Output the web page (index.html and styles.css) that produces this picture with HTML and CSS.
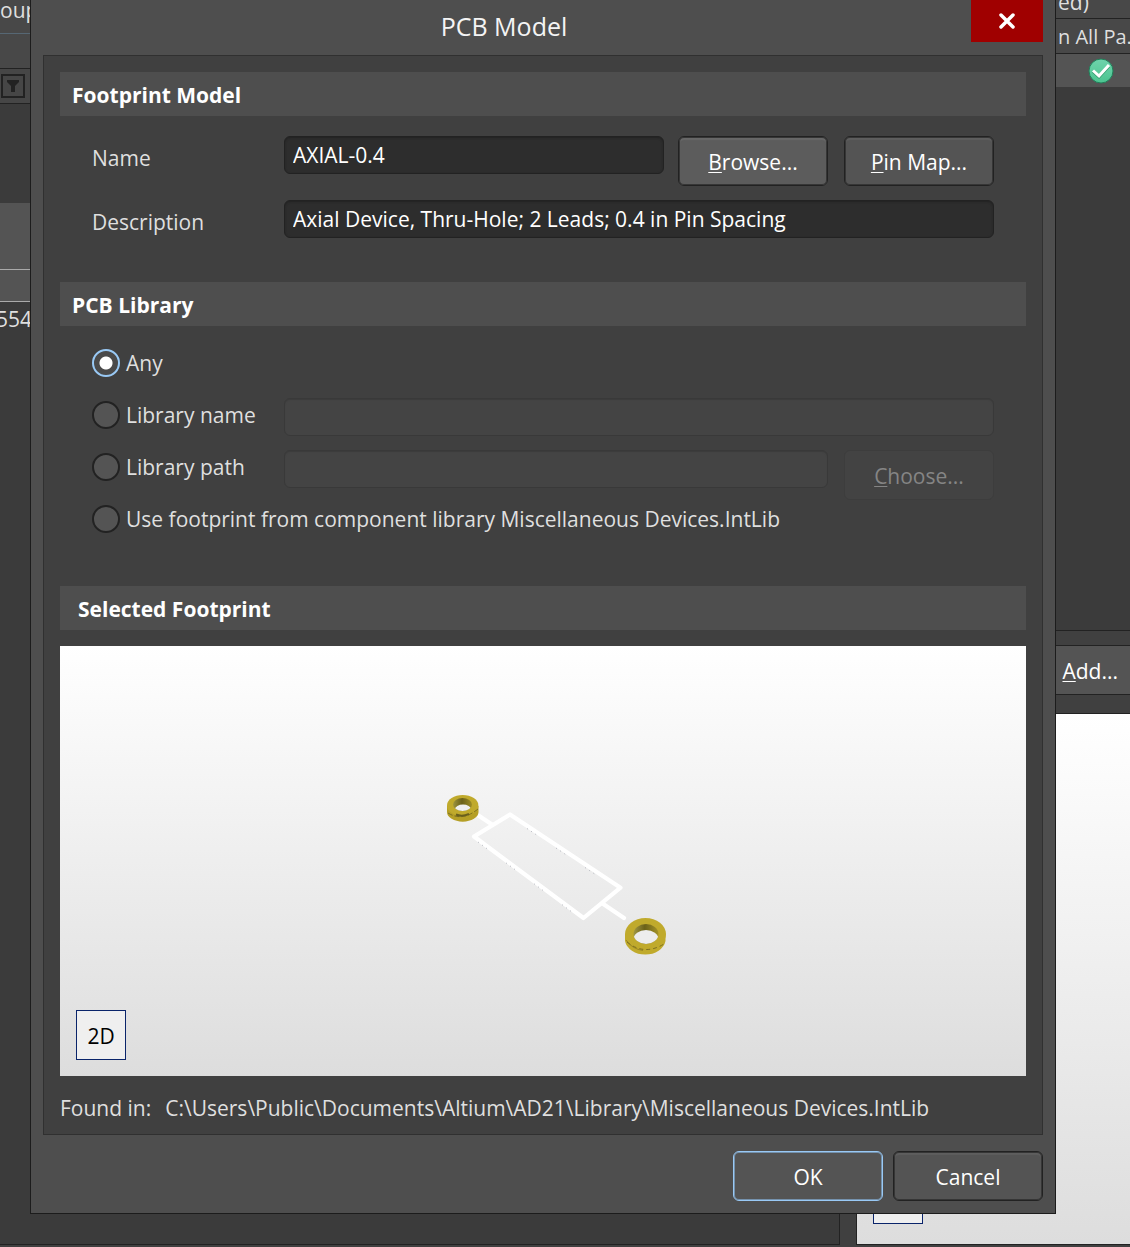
FILE: index.html
```html
<!DOCTYPE html>
<html lang="en">
<head>
<meta charset="utf-8">
<title>PCB Model</title>
<link rel="stylesheet" href="styles.css">
</head>
<body>
<div class="stage">
  <div class="backdrop">
    <div class="back-left">
      <div class="group-bar">oup</div>
      <div class="group-space"></div>
      <div class="filter-row">
        <button class="filter-button" type="button" aria-label="Filter">
          <svg width="12" height="12" viewBox="0 0 12 12"><path d="M0 0H12V2L8 6V12H4V6L0 2Z" fill="#222"/></svg>
        </button>
      </div>
      <div class="list-space"></div>
      <div class="list-selected"></div>
      <div class="list-current"></div>
      <div class="list-value">554</div>
    </div>
    <div class="back-right">
      <div class="grid-caption"><span class="grid-cell">ed)</span></div>
      <div class="grid-head"><span class="grid-cell">n All Pa...</span></div>
      <div class="grid-row">
        <span class="grid-cell grid-status">
          <svg width="26" height="26" viewBox="0 0 26 26" role="img" aria-label="Found">
            <defs><linearGradient id="ok" x1="0" y1="0" x2="0" y2="1"><stop offset="0" stop-color="#6fd3ac"/><stop offset="1" stop-color="#4cc490"/></linearGradient></defs>
            <circle cx="13" cy="13" r="12" fill="url(#ok)" stroke="#21805a"/>
            <path d="M5 13.500L11 19L21 8" fill="none" stroke="#2f9a6c" stroke-width="3"/>
            <path d="M5 12.500L11 18L21 7" fill="none" stroke="#fff" stroke-width="3"/>
          </svg>
        </span>
      </div>
      <div class="grid-body"></div>
      <div class="grid-actions"><button class="add-button" type="button"><u>A</u>dd...</button></div>
      <div class="back-preview"><div class="back-mode"></div></div>
    </div>
  </div>

  <main class="dialog" role="dialog" aria-labelledby="dialog-title">
    <header class="titlebar">
      <h1 class="title" id="dialog-title">PCB Model</h1>
      <button class="close" type="button" aria-label="Close">
        <svg width="16" height="16" viewBox="0 0 16 16"><path d="M2 2L14 14M14 2L2 14" stroke="#fff" stroke-width="3.500" stroke-linecap="round"/></svg>
      </button>
    </header>

    <form class="panel">
      <h2 class="section">Footprint Model</h2>
      <div class="fields">
        <div class="field">
          <label class="label" for="name">Name</label>
          <input class="input" id="name" type="text" value="AXIAL-0.4">
          <div class="actions">
            <button class="button button-hover" type="button"><u>B</u>rowse...</button>
            <button class="button" type="button"><u>P</u>in Map...</button>
          </div>
        </div>
        <div class="field">
          <label class="label" for="description">Description</label>
          <input class="input" id="description" type="text" value="Axial Device, Thru-Hole; 2 Leads; 0.4 in Pin Spacing">
        </div>
      </div>

      <h2 class="section">PCB Library</h2>
      <div class="options">
        <div class="option">
          <label class="choice"><input class="radio" type="radio" name="library" checked>Any</label>
        </div>
        <div class="option">
          <label class="choice choice-field"><input class="radio" type="radio" name="library">Library name</label>
          <input class="input" type="text" aria-label="Library name" disabled>
        </div>
        <div class="option">
          <label class="choice choice-field"><input class="radio" type="radio" name="library">Library path</label>
          <input class="input" type="text" aria-label="Library path" disabled>
          <button class="button choose" type="button" disabled><u>C</u>hoose...</button>
        </div>
        <div class="option">
          <label class="choice"><input class="radio" type="radio" name="library">Use footprint from component library Miscellaneous Devices.IntLib</label>
        </div>
      </div>

      <h2 class="section section-preview">Selected Footprint</h2>
      <div class="preview">
        <svg class="footprint" viewBox="0 0 966 430" role="img" aria-label="Axial footprint">
          <defs>
            <linearGradient id="bore"><stop offset="0" stop-color="#a39a44"/><stop offset=".45" stop-color="#6b6119"/><stop offset="1" stop-color="#a69528"/></linearGradient>
            <clipPath id="bore1"><ellipse cx="402.500" cy="158.500" rx="9.500" ry="6.500"/></clipPath>
            <clipPath id="bore2"><ellipse cx="586" cy="288" rx="12.500" ry="10"/></clipPath>
          </defs>
          <g fill="none" stroke="#fff" stroke-width="4.200" stroke-linecap="round" stroke-linejoin="round">
            <path d="M417 168.500L432 178.500M542.500 257.500L564 272"/>
            <path d="M450 168.500L560.500 241.700L523.500 272L414 190.500Z"/>
          </g>
          <g fill="none" stroke="#b4b6be" stroke-width="1" stroke-dasharray="1 4 1 4 1 24">
            <path d="M467 182.500L548 237M418 196L520 272"/>
          </g>
          <path d="M387 160V166A15.500 9.500 0 0 0 418.500 166V160Z" fill="#b59f26"/>
          <ellipse cx="402.700" cy="159.500" rx="15.700" ry="10.500" fill="#c0aa2c"/>
          <path d="M388 167Q402 176 418 163" fill="none" stroke="#7d7020" stroke-dasharray="5 2"/>
          <g clip-path="url(#bore1)"><path d="M392 150H414V167H392Z" fill="url(#bore)"/><ellipse cx="403" cy="163.500" rx="8" ry="5" fill="#efefef"/></g>
          <path d="M396 168.500Q402 171 409 168" fill="none" stroke="#6a601c" stroke-width="2"/>
          <path d="M565 288V295A20.500 16 0 0 0 605.500 295V288Z" fill="#c0aa2c"/>
          <ellipse cx="585.500" cy="288" rx="20.500" ry="16" fill="#c0aa2c"/>
          <path d="M566 294Q572 303 583 304.500" fill="none" stroke="#9b8823"/>
          <path d="M567 296Q584 310 604 298" fill="none" stroke="#7d7020" stroke-dasharray="4 3"/>
          <g clip-path="url(#bore2)"><path d="M573 277H599V299H573Z" fill="url(#bore)"/><ellipse cx="586" cy="293" rx="12.500" ry="9" fill="#ededed"/></g>
        </svg>
        <button class="mode" type="button">2D</button>
      </div>
      <div class="found"><span>Found in:</span><span>C:\Users\Public\Documents\Altium\AD21\Library\Miscellaneous Devices.IntLib</span></div>
    </form>

    <footer class="footer">
      <button class="button button-default" type="button">OK</button>
      <button class="button" type="button">Cancel</button>
    </footer>
  </main>
</div>
</body>
</html>
```
FILE: styles.css
```css
* { box-sizing: border-box; }

body {
  margin: 0;
  background: #404040;
  color: #dfdfdf;
  font: 21px/32px "Open Sans", "Noto Sans", sans-serif;
}

button, input { font: inherit; color: inherit; margin: 0; padding: 0; }

u { text-underline-offset: 2px; text-decoration-thickness: 1px; }

/* The dialog and the window behind it share one grid cell. */
.stage { display: grid; min-height: 100vh; overflow: hidden; }
.backdrop, .dialog { grid-area: 1 / 1; min-width: 0; }

.backdrop {
  display: grid;
  grid-template-columns: 1fr 274px;
  gap: 16px;
  padding-bottom: 2px;
  white-space: nowrap;
}

.back-left {
  display: flex;
  flex-direction: column;
  overflow: hidden;
  background: #3b3b3b;
  border-right: 1px solid #222;
  border-bottom: 1px solid #222;
}
.group-bar { height: 34px; padding-bottom: 7px; display: flex; align-items: flex-end; background: #484848; border-bottom: 1px solid #566774; }
.group-space { height: 35px; background: #484848; border-bottom: 1px solid #222; }
.filter-row { height: 35px; padding: 5px 1px; background: #464646; border-bottom: 1px solid #222; }
.filter-button { display: grid; place-items: center; width: 24px; height: 24px; background: none; border: 2px solid #222; }
.list-space { height: 99px; }
.list-selected { height: 67px; background: #545454; border-bottom: 1px solid #aaa; }
.list-current { height: 32px; background: #545454; border-bottom: 1px solid #aaa; }
.list-value { line-height: 34px; text-indent: -4px; }

.back-right { display: flex; flex-direction: column; border-left: 1px solid #222; border-bottom: 1px solid #222; }
.grid-cell { width: 72px; margin-left: auto; }
.grid-caption, .grid-head, .grid-row { display: flex; border-bottom: 1px solid #222; background: #484848; }
.grid-caption { height: 19px; align-items: flex-end; }
.grid-head { height: 35px; padding-top: 2px; font-size: 20px; }
.grid-row { height: 33px; align-items: center; background: #545454; border-bottom: 0; }
.grid-status { display: flex; padding-left: 30px; }
.grid-body { height: 544px; background: #3b3b3b; border-bottom: 1px solid #222; }
.grid-actions { padding: 14px 0 18px; background: #404040; border-bottom: 1px solid #222; }
.add-button {
  display: block;
  width: 100%;
  height: 50px;
  padding: 2px 12px 0 0;
  text-align: right;
  color: #fff;
  background: #545454;
  border: solid #222;
  border-width: 1px 0;
}
.back-preview { flex: 1; display: flex; align-items: flex-end; padding: 20px 16px; background: linear-gradient(#fff, #ddd); }
.back-mode { width: 50px; height: 50px; background: #efefef; border: 1px solid #0a246a; }

.dialog {
  align-self: start;
  margin: 0 74px 33px 30px;
  padding: 0 12px 12px;
  background: #4e4e4e;
  border: solid #1c1c1c;
  border-width: 0 1px 1px;
}

.titlebar { display: grid; grid-template-columns: 72px 1fr 72px; height: 55px; }
.title { grid-column: 2; justify-self: center; margin: 0; padding-right: 78px; font-size: 25px; font-weight: 400; line-height: 52px; color: #f4f4f4; }
.close { display: grid; place-items: center; height: 42px; background: #a00000; border: 0; }

.panel { padding: 16px 16px 10px; background: #404040; border: 1px solid #303030; }

.section { margin: 0; padding: 2px 12px 0; font-size: 21px; font-weight: 700; line-height: 42px; color: #fff; background: #4e4e4e; }
.section-preview { padding-left: 18px; }

.fields { display: flex; flex-direction: column; gap: 14px; padding: 20px 32px 38px; }
.field { display: flex; align-items: flex-start; gap: 14px; }
.label { width: 178px; line-height: 44px; }
.actions { display: flex; gap: 16px; }

.input {
  flex: 1;
  min-width: 0;
  height: 38px;
  padding: 0 8px;
  color: #fff;
  background: #2d2d2d;
  border: 1px solid #222;
  border-radius: 6px;
  box-shadow: inset 0 1px 2px #222;
}
.input:disabled { background: #444; border-color: #393939; box-shadow: inset 0 1px 1px #3c3c3c; }

.button {
  width: 150px;
  height: 50px;
  padding-top: 2px;
  color: #fff;
  background: #545454;
  border: 1px solid #222;
  border-radius: 6px;
  box-shadow: inset 0 0 0 1px #363636, inset 0 3px 1px #5e5e5e;
}
.button-hover { background: #5c5c5c; box-shadow: inset 0 0 0 1px #363636, inset 0 3px 1px #686868; }
.button-default { border-color: #99c9f5; box-shadow: inset 0 0 0 1px #7592ad; }
.button:disabled { color: #858585; background: #434343; border-color: #3d3d3d; box-shadow: none; }

.options { padding: 20px 32px 32px; }
.option { display: flex; align-items: flex-start; gap: 16px; height: 52px; }
.choice { display: flex; align-items: center; gap: 6px; line-height: 34px; }
.choice-field { width: 176px; white-space: nowrap; }
.choose { flex: none; }

.radio {
  appearance: none;
  flex: none;
  width: 28px;
  height: 28px;
  background: #545454;
  border: 2px solid #222;
  border-radius: 50%;
}
.radio:checked { border-color: #99c9f5; background: radial-gradient(circle, #fff 6px, #4a4a4a 7px); }

.preview { position: relative; margin-top: 16px; background: linear-gradient(#fff, #ddd); }
.footprint { display: block; width: 100%; height: 430px; }
.mode {
  position: absolute;
  left: 16px;
  bottom: 16px;
  width: 50px;
  height: 50px;
  padding-top: 2px;
  color: #000;
  background: #efefef;
  border: 1px solid #0a246a;
}

.found { display: flex; gap: 14px; padding-top: 16px; }

.footer { display: flex; justify-content: flex-end; gap: 10px; padding-top: 16px; }
```
